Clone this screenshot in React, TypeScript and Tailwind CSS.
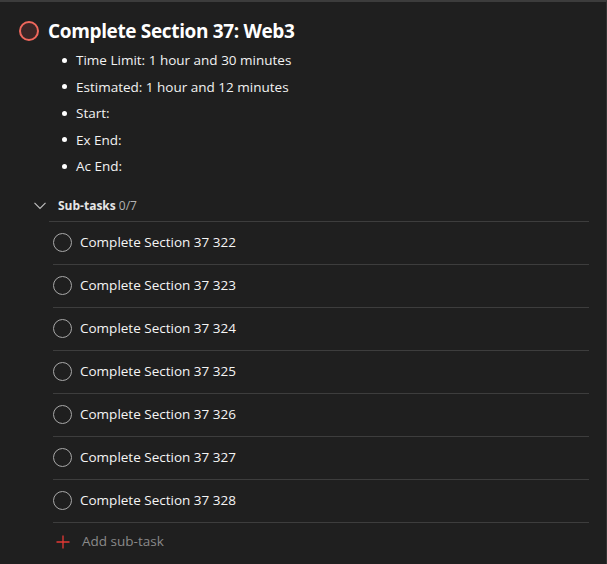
import React from "react";

const subs = [322, 323, 324, 325, 326, 327, 328];

export default function App() {
  const font = { fontFamily: '"Segoe UI", "Open Sans", "Noto Sans", sans-serif' };
  return (
    <div className="w-[607px] h-[564px] bg-[#1f1f1f] text-white overflow-hidden" style={font}>
      <div className="h-full border-t-2 border-r border-t-[#3c3c3c] border-r-[#333333] flex flex-col">
        <div className="flex items-center pl-[19px] pt-[16px] h-[26px] box-content">
          <div className="w-[20px] h-[20px] rounded-full border-2 border-[#f0675c] bg-[#3b2626]" />
          <div className="ml-[9px] text-[19px] font-bold tracking-[-0.35px]">Complete Section 37: Web3</div>
        </div>
        <ul className="mt-[3px] ml-[62px] text-[13.5px] text-[#f2f2f2]">
          {["Time Limit: 1 hour and 30 minutes", "Estimated: 1 hour and 12 minutes", "Start:", "Ex End:", "Ac End:"].map((t) => (
            <li key={t} className="flex items-center h-[26.5px]">
              <span className="w-[5px] h-[5px] rounded-full bg-white" />
              <span className="ml-[9px]">{t}</span>
            </li>
          ))}
        </ul>
        <div className="flex items-center mt-[16px] ml-[34px] h-[20px]">
          <svg width="12" height="8" viewBox="0 0 12 8" className="text-[#bdbdbd]">
            <path d="M0.5 0.8 L6 6.5 L11.5 0.8" fill="none" stroke="currentColor" strokeWidth="1.2" />
          </svg>
          <span className="ml-[12px] text-[12px] font-bold text-[#e6e6e6]">Sub-tasks</span>
          <span className="ml-[3px] text-[12px] text-[#b3b3b3]">0/7</span>
        </div>
        <div className="ml-[49px] mr-[17px] mt-[5px] border-t border-[#3d3d3d]" />
        <div className="ml-[53px] mr-[17px]">
          {subs.map((n) => (
            <div key={n} className="flex items-center h-[43px] border-b border-[#3d3d3d]">
              <div className="w-[19px] h-[19px] rounded-full border-[1.5px] border-[#a8a8a8]" />
              <span className="ml-[8px] text-[13.5px] text-[#f5f5f5]">Complete Section 37 {n}</span>
            </div>
          ))}
          <div className="flex items-center h-[38px]">
            <svg width="16" height="16" viewBox="0 0 16 16" className="ml-[2px]">
              <path d="M8 1.5 V14.5 M1.5 8 H14.5" stroke="#e53935" strokeWidth="1.3" />
            </svg>
            <span className="ml-[11px] text-[13.5px] text-[#8a8a8a]">Add sub-task</span>
          </div>
        </div>
      </div>
    </div>
  );
}
